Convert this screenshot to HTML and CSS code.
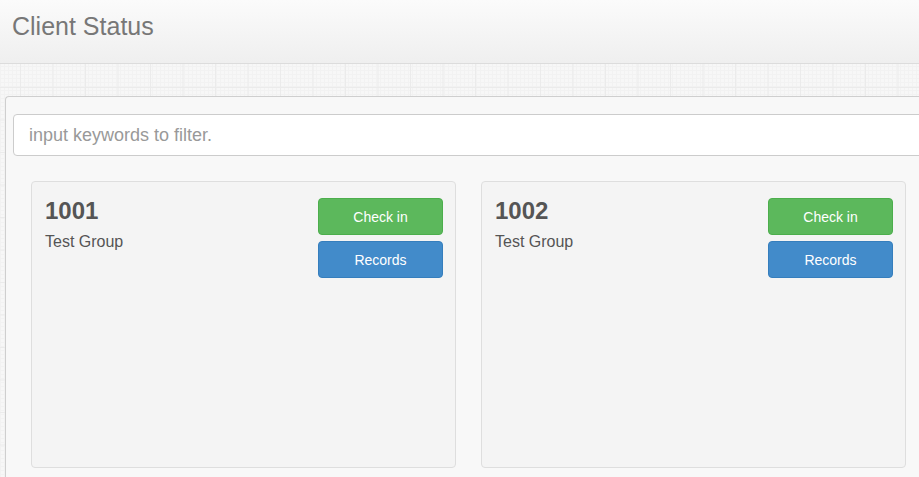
FILE: index.html
```html
<!DOCTYPE html>
<html lang="en">
<head>
  <meta charset="UTF-8" />
  <meta name="viewport" content="width=device-width, initial-scale=1" />
  <title>Client Status</title>
  <link rel="stylesheet" href="styles.css">
</head>
<body>
  <!-- Top bar -->
  <header class="top-bar">
    <h1 class="page-title">Client Status</h1>
  </header>

  <!-- Client list -->
  <main class="status-panel">
    <input type="text" class="filter-input" placeholder="input keywords to filter." />

    <div class="client-grid">
      <div class="client-card">
        <div class="client-info">
          <h2>1001</h2>
          <p>Test Group</p>
        </div>
        <div class="client-actions">
          <button class="btn btn-checkin">Check in</button>
          <button class="btn btn-records">Records</button>
        </div>
      </div>

      <div class="client-card">
        <div class="client-info">
          <h2>1002</h2>
          <p>Test Group</p>
        </div>
        <div class="client-actions">
          <button class="btn btn-checkin">Check in</button>
          <button class="btn btn-records">Records</button>
        </div>
      </div>
    </div>
  </main>
</body>
</html>
```

FILE: styles.css
```css
* {
  box-sizing: border-box;
  margin: 0;
  padding: 0;
  font-family: 'Liberation Sans', Arial, sans-serif;
}

html, body {
  height: 100%;
  overflow: hidden;
}

body {
  display: flex;
  flex-direction: column;
  background-color: #f7f7f7;
  background-image:
    linear-gradient(to right, #ebebeb 1px, transparent 1px),
    linear-gradient(to bottom, #ebebeb 1px, transparent 1px),
    linear-gradient(to right, #f2f2f2 1px, transparent 1px),
    linear-gradient(to bottom, #f2f2f2 1px, transparent 1px);
  background-size: 32.5px 32.5px, 32.5px 32.5px, 4px 4px, 4px 4px;
  background-position: 20px 22px;
}

.top-bar {
  flex: 0 0 64px;
  background: linear-gradient(#fbfbfb, #efefef);
  border-bottom: 1px solid #dcdcdc;
  padding: 11px 12px 0;
}

.page-title {
  font-size: 25px;
  font-weight: normal;
  color: #777;
  line-height: 30px;
}

/* panel runs off the right and bottom edges of the window */
.status-panel {
  flex: 1;
  margin: 32px 0 0 5px;
  overflow: hidden;
  background: #f8f8f8;
  border: 1px solid #cfcfcf;
  border-right: none;
  border-bottom: none;
  border-radius: 4px 0 0 0;
  padding: 17px 0 0 7px;
}

.filter-input {
  display: block;
  width: calc(100% + 10px);
  height: 42px;
  padding: 0 15px;
  font-size: 18px;
  color: #555;
  background: #fff;
  border: 1px solid #ccc;
  border-radius: 4px;
  outline: none;
}

.filter-input::placeholder {
  color: #999;
}

.client-grid {
  display: flex;
  gap: 25px;
  margin-top: 25px;
  padding-left: 18px;
}

.client-card {
  flex: 0 0 425px;
  height: 287px;
  display: flex;
  justify-content: space-between;
  align-items: flex-start;
  background: #f4f4f4;
  border: 1px solid #dedede;
  border-radius: 4px;
  padding: 16px 12px 0 13px;
}

.client-info h2 {
  font-size: 24px;
  font-weight: bold;
  color: #555;
  line-height: 30px;
  margin-top: -2px;
}

.client-info p {
  font-size: 16px;
  color: #555;
  margin-top: 7px;
}

.client-actions {
  display: flex;
  flex-direction: column;
  gap: 6px;
}

.btn {
  width: 125px;
  height: 37px;
  font-size: 14px;
  color: #fff;
  border-radius: 4px;
  border: 1px solid transparent;
  cursor: pointer;
}

.btn-checkin {
  background-color: #5cb85c;
  border-color: #4cae4c;
}

.btn-records {
  background-color: #428bca;
  border-color: #357ebd;
}
```
